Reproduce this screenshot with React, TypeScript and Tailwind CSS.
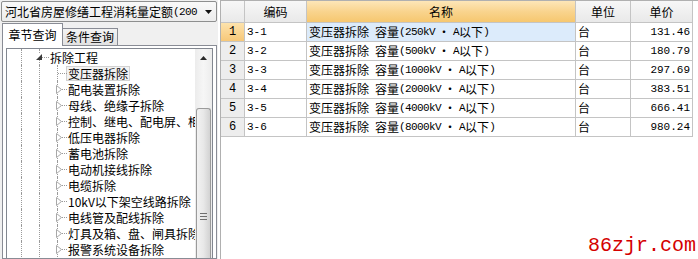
import React from "react";

const cjk = "font-['SimSun','Noto_Sans_CJK_SC',sans-serif]";
const mono = "font-['Liberation_Mono','Noto_Sans_CJK_SC',monospace]";

function ExpandedIcon() {
  return (
    <svg width="6" height="6" viewBox="0 0 6 6">
      <polygon points="6,0 6,6 0,6" fill="#3a3a3a" />
    </svg>
  );
}

function CollapsedIcon() {
  return (
    <svg width="6" height="9" viewBox="0 0 6 9">
      <polygon points="0.5,0.5 5.5,4.5 0.5,8.5" fill="white" stroke="#a8a8a8" strokeWidth="1" />
    </svg>
  );
}

const children: { t: string; leaf?: boolean; sel?: boolean }[] = [
  { t: "变压器拆除", leaf: true, sel: true },
  { t: "配电装置拆除" },
  { t: "母线、绝缘子拆除" },
  { t: "控制、继电、配电屏、柜拆除" },
  { t: "低压电器拆除" },
  { t: "蓄电池拆除" },
  { t: "电动机接线拆除" },
  { t: "电缆拆除" },
  { t: "10kV以下架空线路拆除" },
  { t: "电线管及配线拆除" },
  { t: "灯具及箱、盘、闸具拆除" },
  { t: "报警系统设备拆除" },
];

const rows = [
  { no: "1", code: "3-1", cap: "250", price: "131.46" },
  { no: "2", code: "3-2", cap: "500", price: "180.79" },
  { no: "3", code: "3-3", cap: "1000", price: "297.69" },
  { no: "4", code: "3-4", cap: "2000", price: "383.51" },
  { no: "5", code: "3-5", cap: "4000", price: "666.41" },
  { no: "6", code: "3-6", cap: "8000", price: "980.24" },
];

function TreeRowLevel1() {
  return (
    <div className="flex h-[16px] items-stretch">
      <div className="w-[14px] shrink-0" />
      <div className="w-[18px] shrink-0 border-l border-dotted border-[#9a9a9a]" />
      <div className="relative w-[9px] shrink-0 border-l border-dotted border-[#9a9a9a]">
        <div className="absolute left-0 top-[8px] w-[9px] border-t border-dotted border-[#9a9a9a]" />
        <div className="absolute left-[-4px] top-[5px] flex bg-white">
          <ExpandedIcon />
        </div>
      </div>
      <div className="flex items-center">
        <span className="border border-transparent px-[1px] leading-[13px] whitespace-nowrap">拆除工程</span>
      </div>
    </div>
  );
}

function TreeRowLevel2({ t, leaf, sel }: { t: string; leaf?: boolean; sel?: boolean }) {
  return (
    <div className="flex h-[16px] items-stretch">
      <div className="w-[14px] shrink-0" />
      <div className="w-[18px] shrink-0 border-l border-dotted border-[#9a9a9a]" />
      <div className="w-[18px] shrink-0 border-l border-dotted border-[#9a9a9a]" />
      <div className="relative w-[9px] shrink-0 border-l border-dotted border-[#9a9a9a]">
        <div className="absolute left-0 top-[8px] w-[9px] border-t border-dotted border-[#9a9a9a]" />
        {!leaf && (
          <div className="absolute left-[-2px] top-[4px] flex bg-white">
            <CollapsedIcon />
          </div>
        )}
      </div>
      <div className="flex items-center">
        <span
          className={
            sel
              ? "border border-[#d2d2d2] bg-[#f2f2f2] px-[1px] leading-[13px] whitespace-nowrap"
              : "border border-transparent px-[1px] leading-[13px] whitespace-nowrap"
          }
        >
          {t}
        </span>
      </div>
    </div>
  );
}

export default function App() {
  return (
    <div className={`relative flex h-[259px] w-[698px] overflow-hidden bg-white text-[12px] text-black ${cjk}`}>
      {/* Left panel */}
      <div className="flex w-[218px] shrink-0 flex-col bg-[#f0f0f0]">
        {/* Dropdown */}
        <div className="mx-[1px] mt-[1px] flex h-[21px] items-center rounded-[2px] border border-[#8e8f8f] bg-gradient-to-b from-[#f9f9f9] to-[#ececec]">
          <div className="flex w-[199px] items-center whitespace-nowrap pl-[3px] leading-[14px]">
            <span>河北省房屋修缮工程消耗量定额</span>
            <span className={`text-[11px] tracking-[-0.6px] ${mono}`}>(200</span>
          </div>
          <div className="flex flex-1 items-center justify-center">
            <svg width="7" height="4" viewBox="0 0 7 4">
              <polygon points="0,0 7,0 3.5,4" fill="#111" />
            </svg>
          </div>
        </div>
        {/* Tabs */}
        <div className="flex h-[23px] items-end pl-[2px]">
          <div className="relative z-10 mb-[-1px] flex h-[23px] w-[61px] items-center justify-center border border-b-0 border-[#898c95] bg-white leading-[14px]">
            章节查询
          </div>
          <div className="flex h-[17px] w-[55px] items-center justify-center border border-b-0 border-l-0 border-[#898c95] bg-gradient-to-b from-[#f3f3f3] to-[#e2e2e2] leading-[14px]">
            条件查询
          </div>
        </div>
        {/* Tab page */}
        <div className="ml-[2px] mr-[1px] flex flex-1 flex-col border border-[#898c95] bg-white px-[3px] pt-[2px]">
          <div className="flex flex-1 border border-b-0 border-[#828790] bg-white">
            <div className="flex-1 overflow-hidden">
              <TreeRowLevel1 />
              {children.map((c) => (
                <TreeRowLevel2 key={c.t} t={c.t} leaf={c.leaf} sel={c.sel} />
              ))}
            </div>
            {/* Scrollbar */}
            <div className="flex w-[17px] shrink-0 flex-col bg-gradient-to-r from-[#ececec] via-[#f6f6f6] to-[#ececec]">
              <div className="flex h-[17px] items-center justify-center">
                <svg width="7" height="4" viewBox="0 0 7 4">
                  <polygon points="0,4 7,4 3.5,0" fill="#2a2a2a" />
                </svg>
              </div>
              <div className="h-[42px]" />
              <div className="mx-[1px] flex flex-1 flex-col items-center rounded-t-[3px] border border-b-0 border-[#9b9b9b] bg-gradient-to-r from-[#f2f2f2] via-[#e8e8e8] to-[#d2d2d2] pt-[104px]">
                <div className="h-px w-[7px] bg-[#6e6e6e]" />
                <div className="mt-[2px] h-px w-[7px] bg-[#6e6e6e]" />
                <div className="mt-[2px] h-px w-[7px] bg-[#6e6e6e]" />
              </div>
            </div>
          </div>
        </div>
      </div>

      {/* Right panel: table */}
      <div className="ml-[2px] flex-1 border-l border-t border-[#b0b0b0] bg-white">
        <div className="grid w-[472px] grid-cols-[24px_62px_269px_55px_62px]">
          {/* header */}
          <div className="h-[22px] border-b border-r border-[#c4c4c4] bg-gradient-to-b from-[#f7f7f7] to-[#e9e9e9]" />
          <div className="flex h-[22px] items-center justify-center border-b border-r border-[#c4c4c4] bg-gradient-to-b from-[#f7f7f7] to-[#e9e9e9] leading-[14px]">
            编码
          </div>
          <div className="flex h-[22px] items-center justify-center border-b border-r border-[#c4c4c4] bg-gradient-to-b from-[#fde6b8] via-[#f9d48e] to-[#f6c76f] leading-[14px]">
            名称
          </div>
          <div className="flex h-[22px] items-center justify-center border-b border-r border-[#c4c4c4] bg-gradient-to-b from-[#f7f7f7] to-[#e9e9e9] leading-[14px]">
            单位
          </div>
          <div className="flex h-[22px] items-center justify-center border-b border-r border-[#c4c4c4] bg-gradient-to-b from-[#f7f7f7] to-[#e9e9e9] leading-[14px]">
            单价
          </div>
          {rows.map((r, i) => (
            <React.Fragment key={r.no}>
              <div
                className={
                  i === 0
                    ? `flex h-[19px] items-center justify-center border-b border-r border-[#c4c4c4] bg-gradient-to-b from-[#fde3ac] to-[#f7c878] text-[12px] ${mono}`
                    : `flex h-[19px] items-center justify-center border-b border-r border-[#c4c4c4] bg-[#ededed] text-[12px] ${mono}`
                }
              >
                {r.no}
              </div>
              <div className={`flex h-[19px] items-center border-b border-r border-[#c4c4c4] pl-[2px] text-[11px] ${mono}`}>
                {r.code}
              </div>
              <div
                className={
                  i === 0
                    ? "flex h-[19px] items-center whitespace-nowrap border-b border-r border-[#c4c4c4] bg-[#dcebfb] pl-[2px] leading-[14px]"
                    : "flex h-[19px] items-center whitespace-nowrap border-b border-r border-[#c4c4c4] pl-[2px] leading-[14px]"
                }
              >
                <span>变压器拆除</span>
                <span className="ml-[6px]">容量</span>
                <span className={`text-[11px] tracking-[-0.6px] ${mono}`}>({r.cap}kV</span>
                <span className="px-[3px]">·</span>
                <span className={`text-[11px] tracking-[-0.6px] ${mono}`}>A</span>
                <span>以下</span>
                <span className={`text-[11px] ${mono}`}>)</span>
              </div>
              <div className="flex h-[19px] items-center border-b border-r border-[#c4c4c4] pl-[2px] leading-[14px]">
                台
              </div>
              <div className={`flex h-[19px] items-center justify-end border-b border-r border-[#c4c4c4] pr-[2px] text-[11px] ${mono}`}>
                {r.price}
              </div>
            </React.Fragment>
          ))}
        </div>
      </div>

      {/* Watermark */}
      <div className={`pointer-events-none absolute left-[588px] top-[234px] text-[20px] leading-[24px] text-[#d40000] ${mono}`}>
        86zjr.com
      </div>
    </div>
  );
}
